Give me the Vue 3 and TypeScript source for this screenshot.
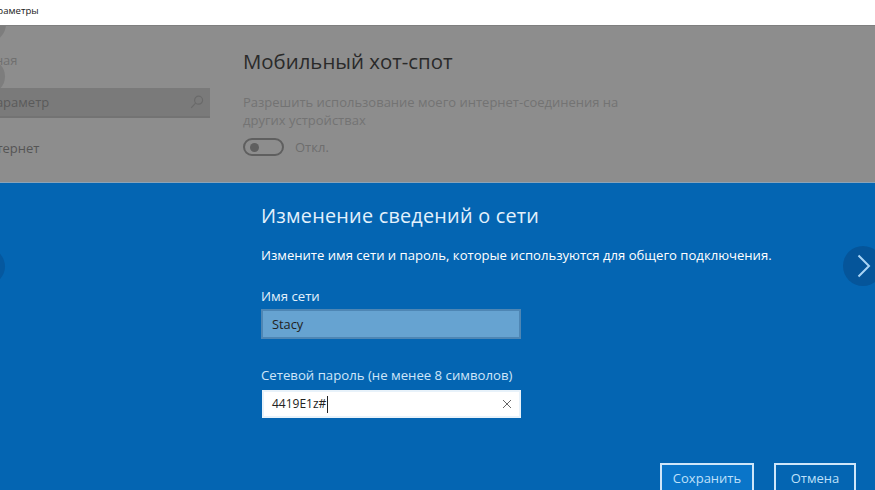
<script setup lang="ts">
const title = 'Параметры'
</script>

<template>
  <div class="page">
    <header class="titlebar"><span class="app-name">{{ title }}</span></header>
    <section class="settings">
      <aside class="sidebar">
        <div class="home">Главная</div>
        <div class="search">
          <span>Найти параметр</span>
          <svg width="14" height="14" viewBox="0 0 14 14" fill="none" stroke="#6a6a6a" stroke-width="1.2">
            <circle cx="8.6" cy="5.2" r="4" />
            <path d="M5.6 8.2 1.2 12.8" />
          </svg>
        </div>
        <div class="nav-item">Сеть и Интернет</div>
      </aside>
      <div class="content">
        <h1>Мобильный хот-спот</h1>
        <p>Разрешить использование моего интернет-соединения на<br />других устройствах</p>
        <div class="toggle-row">
          <span class="toggle"><i></i></span>
          <span>Откл.</span>
        </div>
      </div>
      <span class="ghost ghost-one"></span>
      <span class="ghost ghost-two"></span>
    </section>
    <section class="dialog">
      <span class="pager pager-left"></span>
      <span class="pager pager-right">
        <svg width="16" height="26" viewBox="0 0 16 26" fill="none" stroke="#a9d4f5" stroke-width="2">
          <path d="M2.5 2.5 13 13 2.500 23.500" />
        </svg>
      </span>
      <div class="form">
        <h2>Изменение сведений о сети</h2>
        <p class="lead">Измените имя сети и пароль, которые используются для общего подключения.</p>
        <label class="label first">Имя сети</label>
        <div class="field field-name">Stacy</div>
        <label class="label second">Сетевой пароль (не менее 8 символов)</label>
        <div class="field field-pass">
          <span class="value">4419E1z#<i class="caret"></i></span>
          <svg width="10" height="10" viewBox="0 0 10 10" stroke="#666" stroke-width="1" fill="none">
            <path d="M1 1l8 8M9 1l-8 8" />
          </svg>
        </div>
      </div>
      <div class="actions">
        <button class="btn save">Сохранить</button>
        <button class="btn cancel">Отмена</button>
      </div>
    </section>
  </div>
</template>

<style scoped>
.page {
  width: 875px;
  height: 490px;
  overflow: hidden;
  display: flex;
  flex-direction: column;
  font-family: "Open Sans", "Noto Sans", sans-serif;
}
.titlebar {
  height: 25px;
  background: #fff;
  flex: none;
  font-size: 9.6px;
  line-height: 21px;
  color: #222;
  overflow: hidden;
}
.app-name { display: block; margin-left: -15px; }
.settings {
  position: relative;
  height: 157px;
  flex: none;
  background: #8d8d8d;
  border-top: 1px solid #7f7f7f;
  box-sizing: border-box;
  display: flex;
  overflow: hidden;
}
.sidebar {
  width: 281px;
  flex: none;
  margin-left: -38px;
  font-size: 13px;
  color: #5f5f5f;
}
.home { padding: 25px 0 0 4px; line-height: 18px; color: #707070; }
.search {
  margin-top: 19px;
  width: 248px;
  height: 30px;
  box-sizing: border-box;
  background: #7a7a7a;
  border-bottom: 2px solid #737373;
  display: flex;
  align-items: center;
  justify-content: space-between;
  padding: 0 6px 0 0;
  color: #5a5a5a;
}
.search span { margin-left: -17px; }
.nav-item { margin-top: 21px; margin-left: -28px; line-height: 18px; color: #555; white-space: nowrap; }
.content { padding-top: 22px; color: #6e6e6e; font-size: 13px; }
.content h1 {
  margin: 0;
  font-size: 20.4px;
  line-height: 26px;
  font-weight: 400;
  color: #2a2a2a;
}
.content p { margin: 19px 0 0; line-height: 18px; color: #737373; }
.toggle-row { display: flex; align-items: center; gap: 11px; margin-top: 8px; height: 20px; }
.toggle {
  width: 41px;
  height: 18px;
  box-sizing: border-box;
  border: 2px solid #5f5f5f;
  border-radius: 9px;
  display: flex;
  align-items: center;
  padding-left: 5px;
}
.toggle i { width: 9px; height: 9px; border-radius: 50%; background: #5f5f5f; }
.ghost { position: absolute; border-radius: 50%; background: #7d7d7d; }
.ghost-one { left: -30px; top: -20px; width: 36px; height: 36px; }
.ghost-two { left: -30px; top: 33px; width: 35px; height: 35px; }
.dialog {
  position: relative;
  flex: 1;
  background: #0465b2;
  border-top: 1px solid #8aa3b8;
  box-sizing: border-box;
  color: #fff;
  padding-left: 261px;
}
.form { width: 560px; }
.form h2 {
  margin: 0;
  padding-top: 20px;
  font-size: 19.8px;
  line-height: 26px;
  font-weight: 400;
  color: #e3f1fc;
  letter-spacing: .25px;
}
.lead { margin: 17px 0 0; font-size: 13.1px; line-height: 18px; white-space: nowrap; }
.label { display: block; font-size: 13.2px; line-height: 18px; color: #e3f1fc; }
.label.first { margin-top: 23px; }
.label.second { margin-top: 27px; color: #cfe6f9; }
.field {
  box-sizing: border-box;
  width: 260px;
  height: 30px;
  margin-top: 4px;
  padding-left: 9px;
  font-size: 12px;
  line-height: 22px;
  color: #222;
  border: 2px solid #4a86b8;
}
.field-name { background: #66a3d1; border-color: #4e86b4; line-height: 26px; font-size: 12.8px; }
.field-pass {
  height: 28px;
  margin-top: 6px;
  background: #fff;
  border-color: #e8f2fa;
  display: flex;
  align-items: center;
  justify-content: space-between;
  padding-right: 7px;
  width: 259px;
  margin-left: 1px;
  padding-left: 8px;
}
.value { display: inline-flex; align-items: center; line-height: 16px; }
.caret { display: inline-block; width: 1px; height: 17px; background: #222; margin-left: 1px; }
.pager { position: absolute; border-radius: 50%; background: #05559a; display: flex; align-items: center; }
.pager-left { left: -32px; top: 65px; width: 37px; height: 37px; background: #05589f; }
.pager-right { left: 843px; top: 63px; width: 40px; height: 40px; padding-left: 13px; box-sizing: border-box; }
.actions { position: absolute; left: 660px; top: 280px; display: flex; gap: 20px; }
.btn {
  height: 40px;
  box-sizing: border-box;
  border: 2px solid #cfe6f9;
  font: inherit;
  font-size: 13px;
  line-height: 26px;
  color: #bfe0fa;
  padding: 0;
  display: flex;
  justify-content: center;
  align-items: flex-start;
}
.save { width: 94px; background: #0a75c9; }
.cancel { width: 82px; background: #0465b2; }
</style>
